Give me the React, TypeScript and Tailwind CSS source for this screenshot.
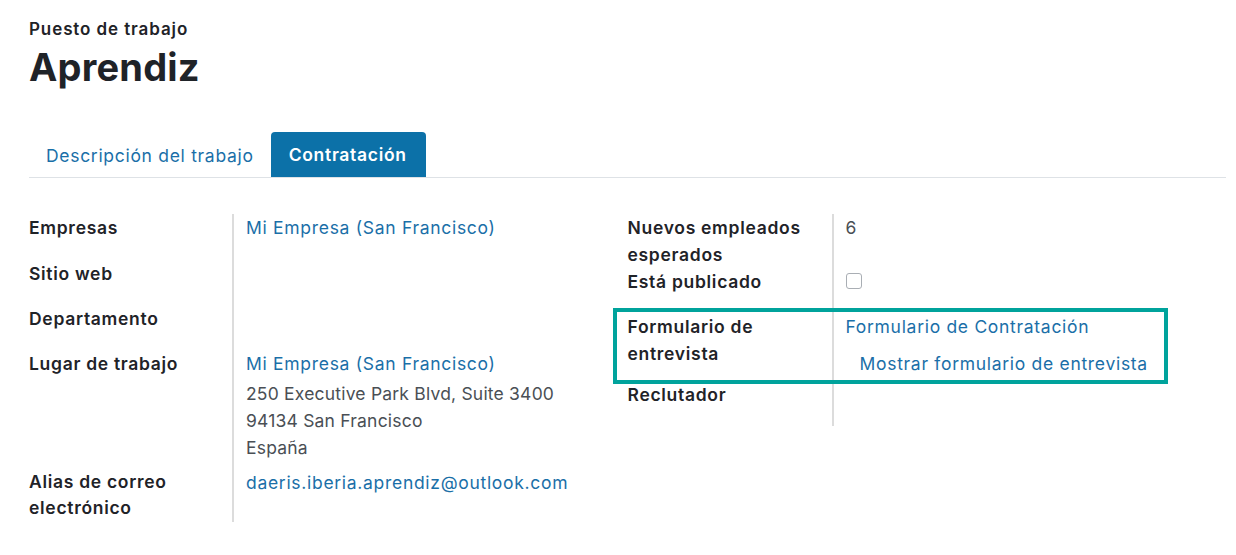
import React from 'react';

const font = { fontFamily: 'Inter, "Noto Sans", sans-serif' };

const Label: React.FC<{ children: React.ReactNode; className?: string }> = ({ children, className = '' }) => (
  <div className={`border-r-2 border-[#dcdcdc] pr-3 font-semibold text-[#1f2328] ${className}`}>{children}</div>
);

const App: React.FC = () => {
  return (
    <div className="min-h-[555px] bg-white pl-[29px] pr-[10px] text-[17.5px] leading-[27px] tracking-[0.7px]" style={font}>
      <div className="pt-[16px]">
        <div className="text-[17px] font-semibold leading-[26px] tracking-[0.9px] text-[#1f2328]">Puesto de trabajo</div>
        <h1 className="mt-[1px] text-[38px] font-bold leading-[48px] tracking-[0.2px] text-[#1f2328]">Aprendiz</h1>
      </div>

      <div className="mt-[41px] flex items-end border-b border-[#dee2e6]">
        <div className="px-[17px] pb-[8px] text-[#1a6fa8]">Descripción del trabajo</div>
        <div className="flex h-[45px] items-center rounded-t-[4px] bg-[#0c71a8] pl-[18px] pr-[19px] font-semibold text-white">
          Contratación
        </div>
      </div>

      <div className="mt-[36px] grid grid-cols-2">
        {/* left group */}
        <div className="grid grid-cols-[205px_1fr] content-start">
          <Label className="h-[46px]">Empresas</Label>
          <div className="pl-3 text-[#1a6fa8]">Mi Empresa (San Francisco)</div>

          <Label className="h-[45px]">Sitio web</Label>
          <div />

          <Label className="h-[45px]">Departamento</Label>
          <div />

          <Label className="h-[119px]">Lugar de trabajo</Label>
          <div className="pl-3">
            <div className="text-[#1a6fa8]">Mi Empresa (San Francisco)</div>
            <div className="mt-[3px] tracking-[0.2px] text-[#4a4f55]">
              <div>250 Executive Park Blvd, Suite 3400</div>
              <div>94134 San Francisco</div>
              <div>España</div>
            </div>
          </div>

          <Label className="h-[53px] leading-[26px]">
            Alias de correo
            <br />
            electrónico
          </Label>
          <div className="pl-3 text-[#1a6fa8]">daeris.iberia.aprendiz@outlook.com</div>
        </div>

        {/* right group */}
        <div className="grid grid-cols-[206px_1fr] content-start">
          <Label className="h-[54px]">
            Nuevos empleados
            <br />
            esperados
          </Label>
          <div className="pl-3 text-[#4a4f55]">6</div>

          <Label className="h-[45px]">Está publicado</Label>
          <div className="pl-3 pt-[5px]">
            <div className="h-[16px] w-[16px] rounded-[3px] border border-[#a9aeb4] bg-white" />
          </div>

          <Label className="relative h-[68px]">
            Formulario de
            <br />
            entrevista
            <div className="pointer-events-none absolute left-[-15px] top-[-5px] h-[76px] w-[555px] border-[4px] border-[#00a39c]" />
          </Label>
          <div className="pl-3 text-[#1a6fa8]">
            <div>Formulario de Contratación</div>
            <div className="mt-[10px] pl-[14px]">Mostrar formulario de entrevista</div>
          </div>

          <Label className="h-[45px]">Reclutador</Label>
          <div />
        </div>
      </div>
    </div>
  );
};

export default App;
